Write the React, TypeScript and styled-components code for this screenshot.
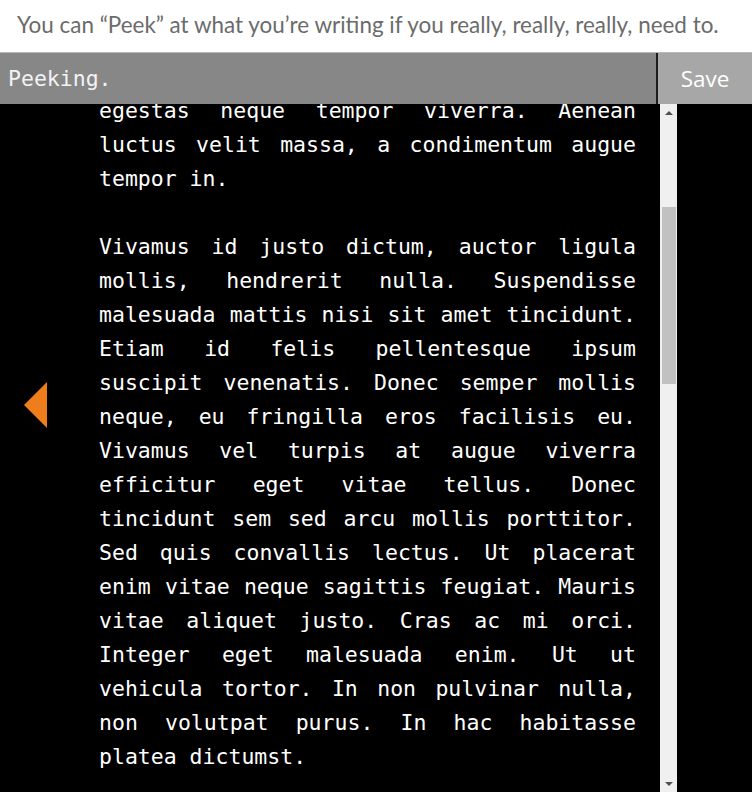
import styled, { createGlobalStyle } from "styled-components";

const PARAGRAPHS = [
  "egestas neque tempor viverra. Aenean luctus velit massa, a condimentum augue tempor in.",
  "Vivamus id justo dictum, auctor ligula mollis, hendrerit nulla. Suspendisse malesuada mattis nisi sit amet tincidunt. Etiam id felis pellentesque ipsum suscipit venenatis. Donec semper mollis neque, eu fringilla eros facilisis eu. Vivamus vel turpis at augue viverra efficitur eget vitae tellus. Donec tincidunt sem sed arcu mollis porttitor. Sed quis convallis lectus. Ut placerat enim vitae neque sagittis feugiat. Mauris vitae aliquet justo. Cras ac mi orci. Integer eget malesuada enim. Ut ut vehicula tortor. In non pulvinar nulla, non volutpat purus. In hac habitasse platea dictumst.",
  "Nulla facilisi. Praesent sed lorem nec nisl aliquet luctus.",
];

export default function App() {
  return (
    <>
      <GlobalStyle />
      <Page>
        <Hint>
          You can “Peek” at what you’re writing if you really, really, really,
          need to.
        </Hint>
        <Toolbar>
          <Status>Peeking.</Status>
          <SaveButton>Save</SaveButton>
        </Toolbar>
        <Editor>
          <Gutter>
            <BackArrow width="23" height="46" viewBox="0 0 23 46">
              <polygon points="0,23 23,0 23,46" fill="#ee7d1b" />
            </BackArrow>
          </Gutter>
          <TextPane>
            <TextContent>
              {PARAGRAPHS.map((text, index) => (
                <Paragraph key={index + 1}>{text}</Paragraph>
              ))}
            </TextContent>
          </TextPane>
          <Scrollbar>
            <ScrollButton>
              <Arrow direction="up" />
            </ScrollButton>
            <Track>
              <Thumb />
            </Track>
            <ScrollButton>
              <Arrow direction="down" />
            </ScrollButton>
          </Scrollbar>
        </Editor>
      </Page>
    </>
  );
}

interface IArrow {
  direction: "up" | "down";
}

const GlobalStyle = createGlobalStyle`
  html, body {
    margin: 0;
    padding: 0;
    background: #ffffff;
  }
  * {
    box-sizing: border-box;
  }
`;

const Page = styled.div`
  width: 752px;
  height: 792px;
  overflow: hidden;
  display: flex;
  flex-direction: column;
`;

const Hint = styled.div`
  height: 52px;
  padding: 0 0 4px 17px;
  display: flex;
  align-items: center;
  font-family: Lato, "Open Sans", sans-serif;
  font-size: 22.45px;
  color: #6b6b6b;
  white-space: nowrap;
`;

const Toolbar = styled.div`
  display: flex;
  height: 52px;
  border-top: 1px solid #b9b9b9;
`;

const Status = styled.div`
  flex: 1;
  display: flex;
  align-items: center;
  padding-left: 8px;
  background-color: #878787;
  border-right: 2px solid #1c1c1c;
  color: #f3f3f3;
  font-family: "DejaVu Sans Mono", monospace;
  font-size: 21.5px;
`;

const SaveButton = styled.div`
  width: 94px;
  display: flex;
  align-items: center;
  justify-content: center;
  background-color: #a7a7a7;
  color: #ffffff;
  font-family: "Open Sans", sans-serif;
  font-size: 22.5px;
  cursor: pointer;
`;

const Editor = styled.div`
  flex: 1;
  display: flex;
  background-color: #000000;
  overflow: hidden;
`;

const Gutter = styled.div`
  width: 99px;
  padding: 278px 0 0 24px;
`;

const BackArrow = styled.svg`
  display: block;
`;

const TextPane = styled.div`
  width: 561px;
  overflow: hidden;
`;

const TextContent = styled.div`
  width: 537px;
  margin-top: -10px;
  color: #ffffff;
  font-family: "DejaVu Sans Mono", monospace;
  font-size: 21.5px;
  line-height: 34px;
  text-align: justify;
`;

const Paragraph = styled.p`
  margin: 0 0 34px;
`;

const Scrollbar = styled.div`
  width: 17px;
  display: flex;
  flex-direction: column;
  background-color: #f0f0f0;
`;

const ScrollButton = styled.div`
  height: 17px;
  display: flex;
  align-items: center;
  justify-content: center;
`;

const Arrow = styled.div<IArrow>`
  width: 0;
  height: 0;
  border-left: 4px solid transparent;
  border-right: 4px solid transparent;
  ${(props) =>
    props.direction === "up"
      ? "border-bottom: 4px solid #505050;"
      : "border-top: 4px solid #505050;"}
`;

const Track = styled.div`
  flex: 1;
  padding: 86px 1px 0 2px;
`;

const Thumb = styled.div`
  height: 177px;
  background-color: #c1c1c1;
`;
